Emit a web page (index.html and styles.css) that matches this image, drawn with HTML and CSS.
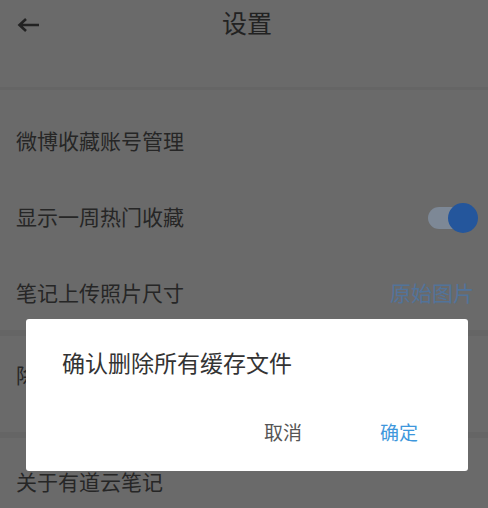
FILE: index.html
```html
<!DOCTYPE html>
<html lang="zh-CN">
<head>
    <meta charset="UTF-8">
    <meta name="viewport" content="width=device-width, initial-scale=1.0">
    <title>设置</title>
    <link rel="stylesheet" href="styles.css">
</head>
<body>

    <div class="page">
        <div class="header">
            <svg class="back" width="24" height="16" viewBox="0 0 24 16">
                <path d="M23 8H4M10 2L3.5 8L10 14" fill="none" stroke="#222" stroke-width="2.6" stroke-linejoin="miter"/>
            </svg>
            <div class="title">设置</div>
        </div>

        <div class="list">
            <div class="row">微博收藏账号管理</div>
            <div class="row">
                <span>显示一周热门收藏</span>
                <div class="switch"><div class="knob"></div></div>
            </div>
            <div class="row">
                <span>笔记上传照片尺寸</span>
                <span class="value">原始图片</span>
            </div>
            <div class="row group tall">除</div>
            <div class="row group last">关于有道云笔记</div>
        </div>

        <div class="dialog">
            <div class="message">确认删除所有缓存文件</div>
            <div class="actions">
                <button class="btn cancel">取消</button>
                <button class="btn ok">确定</button>
            </div>
        </div>
    </div>

</body>
</html>
```

FILE: styles.css
```css
* {
    margin: 0;
    padding: 0;
    box-sizing: border-box;
}
body {
    font-family: "Noto Sans CJK SC", "Liberation Sans", sans-serif;
    background-color: #6a6a6a;
    color: #262626;
}
.page {
    position: relative;
    width: 488px;
    height: 508px;
    overflow: hidden;
}
.header {
    height: 90px;
    display: flex;
    align-items: flex-start;
    padding-top: 4px;
    border-bottom: 3px solid #656565;
    position: relative;
}
.back {
    margin: 13px 0 0 16px;
}
.title {
    position: absolute;
    left: 0;
    right: 0;
    top: 4px;
    text-align: center;
    font-size: 25px;
    line-height: 36px;
    color: #222;
    padding-left: 6px;
}
.list {
    padding-top: 12px;
}
.row {
    height: 76px;
    display: flex;
    align-items: center;
    justify-content: space-between;
    padding: 0 14px 0 16px;
    font-size: 21px;
}
.row.group {
    border-top: 6px solid #656565;
}
.row.tall {
    height: 102px;
    padding-bottom: 20px;
}
.row.last {
    padding-top: 16px;
}
.value {
    color: #52739a;
}
.switch {
    width: 44px;
    height: 22px;
    border-radius: 11px;
    background-color: #7d8896;
    position: relative;
    margin-right: 2px;
    margin-top: 4px;
}
.knob {
    position: absolute;
    right: -6px;
    top: -4px;
    width: 30px;
    height: 30px;
    border-radius: 50%;
    background-color: #24569c;
}
.dialog {
    position: absolute;
    left: 26px;
    top: 319px;
    width: 442px;
    height: 152px;
    background-color: #fff;
    border-radius: 3px;
    padding: 26px 0 0 36px;
}
.message {
    font-size: 23px;
    color: #333;
    line-height: 34px;
}
.actions {
    display: flex;
    justify-content: flex-end;
    margin-top: 40px;
    padding-right: 50px;
    gap: 78px;
}
.btn {
    border: none;
    background: none;
    font-family: inherit;
    font-size: 19px;
    line-height: 26px;
}
.btn.cancel {
    color: #555;
}
.btn.ok {
    color: #3e97dc;
}
```
